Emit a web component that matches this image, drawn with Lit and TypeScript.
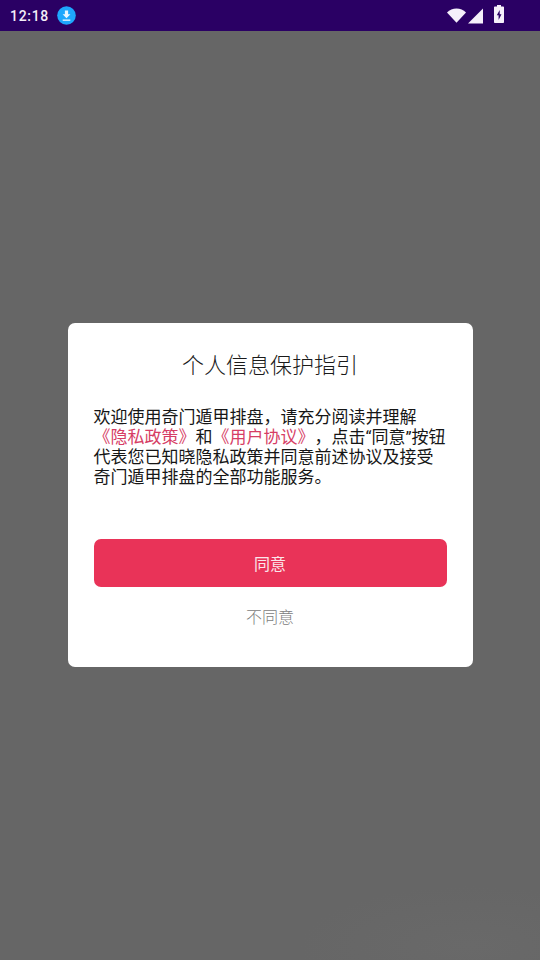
import { LitElement, html, css } from "lit";
import { customElement } from "lit/decorators.js";

@customElement("app-root")
export class AppRoot extends LitElement {
  static styles = css`
    :host {
      display: flex;
      flex-direction: column;
      width: 540px;
      height: 960px;
      overflow: hidden;
      background: #666666;
      font-family: "Noto Sans CJK SC", "Noto Sans", sans-serif;
    }
    .status {
      height: 31px;
      flex: none;
      background: #2a0064;
      display: flex;
      align-items: center;
      padding: 0 36px 0 10px;
      color: #f3eef8;
    }
    .time {
      font-family: Roboto, sans-serif;
      font-size: 14px;
      font-weight: 500;
      letter-spacing: 0.7px;
      line-height: 31px;
      padding-top: 1px;
    }
    .dl {
      margin-left: 8px;
      width: 19px;
      height: 19px;
      display: block;
    }
    .spacer { flex: 1; }
    .icons { display: flex; align-items: center; gap: 2px; }
    .icons svg { display: block; }
    .wifi { margin-top: -1px; }
    .batt { margin-left: 9px; margin-top: -3px; }
    .stage {
      flex: 1;
      display: flex;
      align-items: center;
      justify-content: center;
      padding-bottom: 1px;
      background: radial-gradient(170px 60px at 470px 915px, #696969, #666666);
    }
    .card {
      width: 405px;
      height: 344px;
      box-sizing: border-box;
      background: #ffffff;
      border-radius: 7px;
      padding: 24px 26px 0;
      display: flex;
      flex-direction: column;
    }
    .title {
      font-size: 22px;
      line-height: 32px;
      font-weight: 300;
      color: #1a1a1a;
      text-align: center;
    }
    .body {
      margin-top: 28px;
      font-family: Roboto, "Noto Sans CJK SC", sans-serif;
      font-size: 17px;
      line-height: 20px;
      font-weight: 400;
      color: #161616;
      height: 80px;
      white-space: nowrap;
      text-spacing-trim: space-all;
    }
    .link { color: #d63d65; }
    .agree {
      margin-top: 52px;
      height: 48px;
      flex: none;
      border-radius: 7px;
      background: #e93358;
      color: #fbe6eb;
      font-size: 16px;
      display: flex;
      align-items: center;
      justify-content: center;
    }
    .decline {
      margin-top: 17px;
      font-size: 16px;
      line-height: 24px;
      font-weight: 300;
      color: #7c7c7c;
      text-align: center;
    }
  `;

  render() {
    return html`
      <div class="status">
        <span class="time">12:18</span>
        <svg class="dl" viewBox="0 0 20 20">
          <circle cx="10" cy="10" r="9.8" fill="#1ea7fd"></circle>
          <path d="M8.300 4.800h3.400v4h2.400L10 13 5.900 8.800h2.400z" fill="#eaf6ff"></path>
          <rect x="6" y="14.200" width="8" height="1.400" fill="#eaf6ff"></rect>
        </svg>
        <span class="spacer"></span>
        <div class="icons">
          <svg class="wifi" width="19" height="15" viewBox="0 0 19 15">
            <path d="M0 4.400C2.500 1.900 5.900.4 9.500.4s7 1.500 9.500 4L9.500 14.800z" fill="#f5f0fa"></path>
          </svg>
          <svg width="15" height="16" viewBox="0 0 15 16">
            <path d="M15 .5V15.500H0z" fill="#f5f0fa"></path>
          </svg>
          <svg class="batt" width="10" height="18" viewBox="0 0 10 18">
            <path d="M3 0h4v1.500h2.200c.5 0 .8.300.8.800v15c0 .4-.3.700-.8.700H.8c-.5 0-.8-.3-.8-.7v-15c0-.5.300-.8.800-.8H3z" fill="#f5f0fa"></path>
            <path d="M5.700 5 2.800 10.200h1.800V15l2.900-5.700H5.700z" fill="#2a0064"></path>
          </svg>
        </div>
      </div>
      <div class="stage">
        <div class="card">
          <div class="title">个人信息保护指引</div>
          <div class="body">欢迎使用奇门遁甲排盘，请充分阅读并理解<br /><span class="link">《隐私政策》</span>和<span class="link">《用户协议》</span>，点击“同意”按钮<br />代表您已知晓隐私政策并同意前述协议及接受<br />奇门遁甲排盘的全部功能服务。</div>
          <div class="agree">同意</div>
          <div class="decline">不同意</div>
        </div>
      </div>
    `;
  }
}
